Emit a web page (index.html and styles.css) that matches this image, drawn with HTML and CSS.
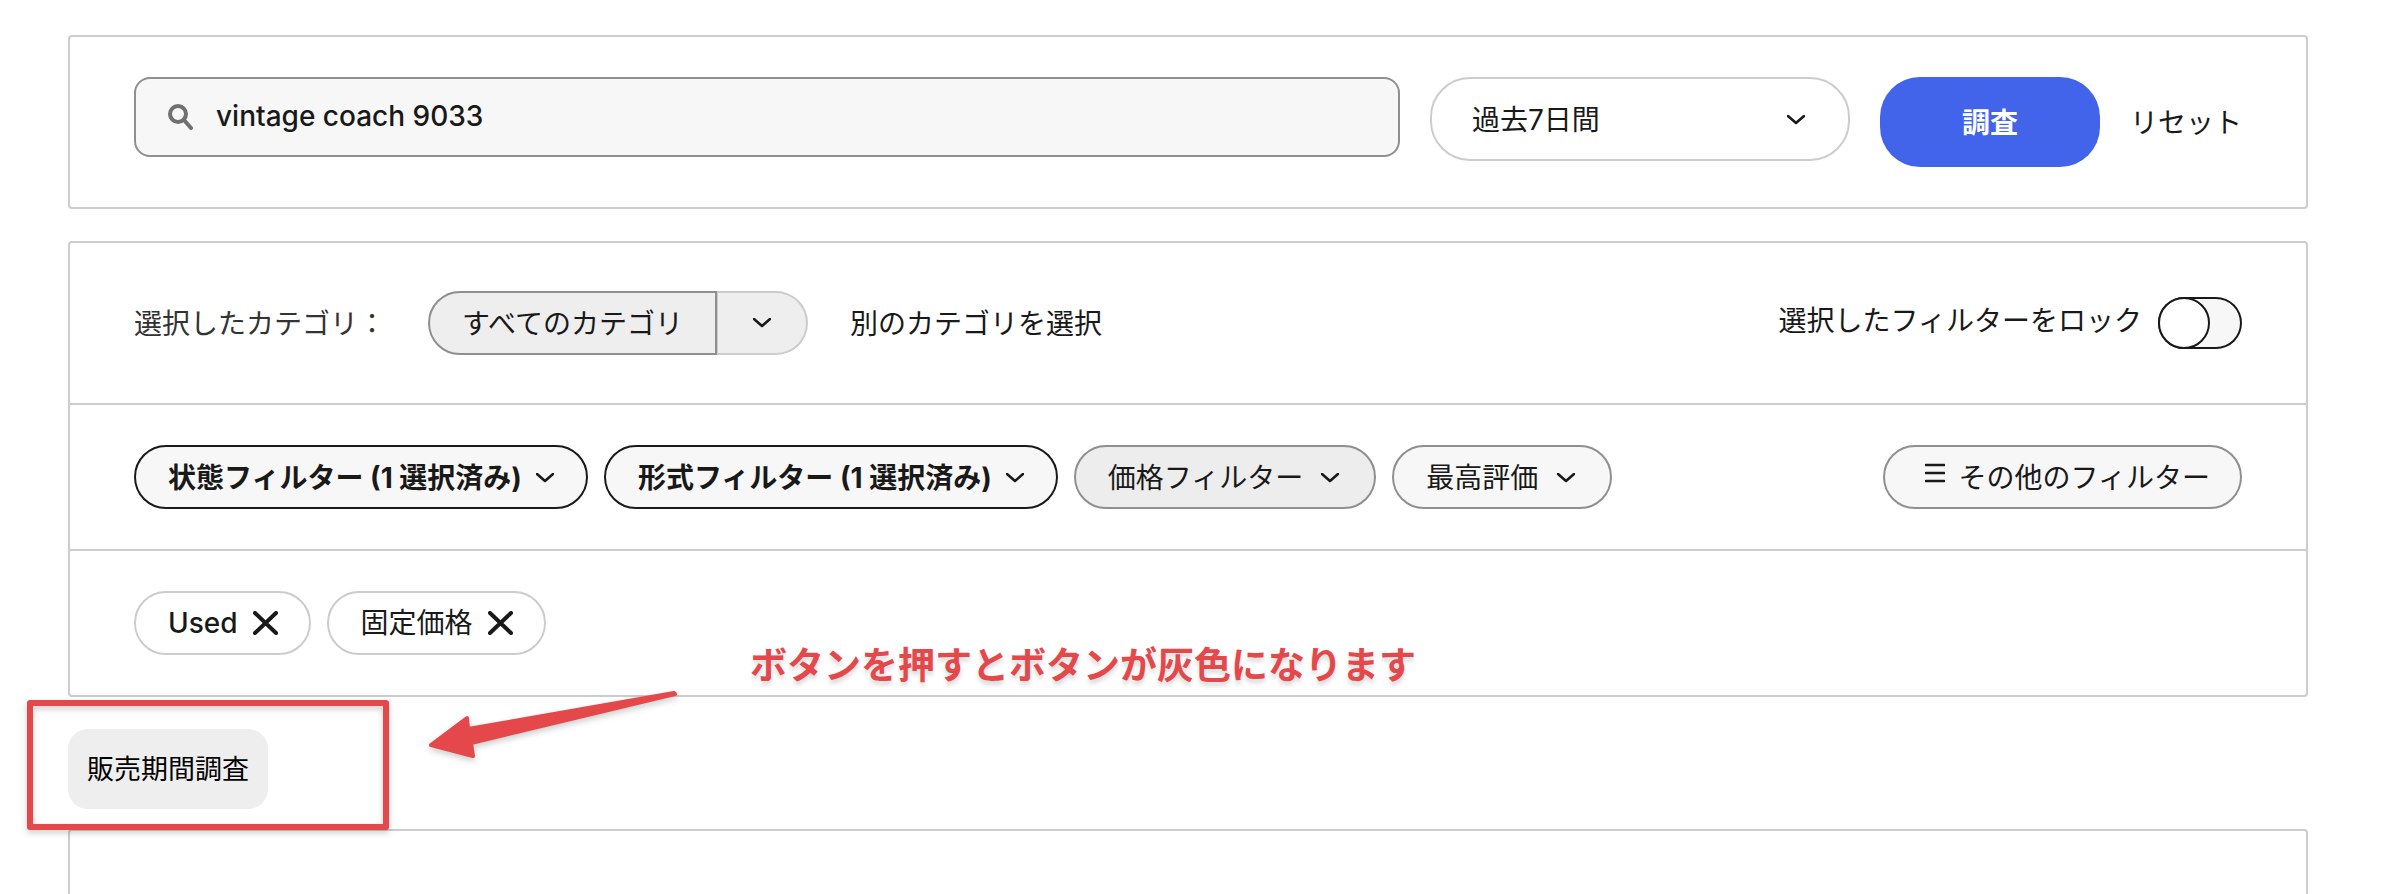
FILE: index.html
```
<!DOCTYPE html>
<html lang="ja">
<head>
<meta charset="UTF-8">
<meta name="viewport" content="width=device-width, initial-scale=1.0">
<title>リサーチ</title>
<link rel="stylesheet" href="styles.css">
</head>
<body>
<main class="page">
    <form class="panel search-panel">
        <label class="search-box">
            <svg class="search-icon" width="26" height="26" viewBox="0 0 26 26" aria-hidden="true">
                <circle cx="10" cy="10" r="8"/>
                <path d="M16 16l7 8"/>
            </svg>
            <input type="text" aria-label="検索キーワード" value="vintage coach 9033">
        </label>
        <div class="period">
            <select aria-label="期間">
                <option>過去7日間</option>
                <option>過去30日間</option>
                <option>過去90日間</option>
            </select>
            <svg class="chevron" width="18" height="10" viewBox="0 0 18 10" aria-hidden="true"><path d="M1 1l8 7 8-7"/></svg>
        </div>
        <button type="submit" class="submit">調査</button>
        <a href="#" class="reset">リセット</a>
    </form>

    <section class="panel">
        <div class="row category-row">
            <span class="category-label">選択したカテゴリ：</span>
            <div class="split">
                <button type="button" class="split-main">すべてのカテゴリ</button>
                <button type="button" class="split-toggle" aria-label="カテゴリを開く">
                    <svg class="chevron" width="18" height="10" viewBox="0 0 18 10" aria-hidden="true"><path d="M1 1l8 7 8-7"/></svg>
                </button>
            </div>
            <a href="#" class="other-category">別のカテゴリを選択</a>
            <div class="lock push">
                <label for="lock">選択したフィルターをロック</label>
                <input type="checkbox" id="lock" class="switch" role="switch">
            </div>
        </div>

        <div class="row">
            <button type="button" class="chip active">状態フィルター (1 選択済み)
                <svg class="chevron" width="18" height="10" viewBox="0 0 18 10" aria-hidden="true"><path d="M1 1l8 7 8-7"/></svg>
            </button>
            <button type="button" class="chip active">形式フィルター (1 選択済み)
                <svg class="chevron" width="18" height="10" viewBox="0 0 18 10" aria-hidden="true"><path d="M1 1l8 7 8-7"/></svg>
            </button>
            <button type="button" class="chip pressed">価格フィルター
                <svg class="chevron" width="18" height="10" viewBox="0 0 18 10" aria-hidden="true"><path d="M1 1l8 7 8-7"/></svg>
            </button>
            <button type="button" class="chip">最高評価
                <svg class="chevron" width="18" height="10" viewBox="0 0 18 10" aria-hidden="true"><path d="M1 1l8 7 8-7"/></svg>
            </button>
            <button type="button" class="chip more push">
                <svg class="menu-icon" width="20" height="26" viewBox="0 0 20 26" aria-hidden="true"><path d="M1 5h18M1 13h18M1 21h18"/></svg>
                その他のフィルター
            </button>
        </div>

        <div class="row">
            <button type="button" class="chip tag"><span class="latin">Used</span>
                <svg class="cross" width="25" height="24" viewBox="0 0 25 24" aria-hidden="true"><path d="M2 2l21 20M23 2L2 22"/></svg>
            </button>
            <button type="button" class="chip tag">固定価格
                <svg class="cross" width="25" height="24" viewBox="0 0 25 24" aria-hidden="true"><path d="M2 2l21 20M23 2L2 22"/></svg>
            </button>
        </div>
    </section>

    <section class="sales">
        <button type="button" class="sales-button">販売期間調査</button>
        <div class="mark-frame"></div>
        <svg class="mark-arrow" width="252" height="72" viewBox="0 0 252 72" aria-hidden="true">
            <path d="M3 56L39 29 40 40 246 4 247 5 43 54 45 67Z"/>
        </svg>
        <p class="mark-text">ボタンを押すとボタンが灰色になります</p>
    </section>

    <section class="panel results"></section>
</main>
</body>
</html>
```

FILE: styles.css
```
*, *::before {
    box-sizing: border-box;
}
body {
    margin: 0;
    background: #fff;
    color: #191919;
    font-family: Inter, "Noto Sans CJK JP", sans-serif;
    font-size: 28px;
    line-height: 40px;
}
button, input, select {
    font: inherit;
    color: inherit;
    margin: 0;
}
button {
    cursor: pointer;
    white-space: nowrap;
}
a {
    color: inherit;
    text-decoration: none;
    white-space: nowrap;
}
svg {
    fill: none;
    stroke: #191919;
    stroke-linecap: round;
    stroke-linejoin: round;
    flex-shrink: 0;
}
.page {
    display: flex;
    flex-direction: column;
    min-height: 100vh;
    padding: 35px 76px 0 68px;
}
.panel {
    border: 2px solid #ccc;
    border-radius: 4px;
}
.chevron {
    stroke-width: 2.6;
}

/* search bar */
.search-panel {
    display: flex;
    align-items: flex-start;
    gap: 30px;
    padding: 40px 64px;
    margin-bottom: 32px;
}
.search-box {
    flex: 1;
    display: flex;
    align-items: center;
    gap: 22px;
    height: 80px;
    padding: 0 32px;
    background: #f7f7f7;
    border: 2px solid #8f8f8f;
    border-radius: 16px;
}
.search-icon {
    stroke: #707070;
    stroke-width: 4;
}
.search-box input {
    flex: 1;
    min-width: 0;
    padding: 0 0 2px;
    border: none;
    outline: none;
    background: transparent;
    font-weight: 500;
}
.period {
    position: relative;
    width: 420px;
}
.period select {
    appearance: none;
    width: 100%;
    height: 84px;
    padding: 2px 80px 0 40px;
    background: #fff;
    border: 2px solid #ccc;
    border-radius: 40px;
}
.period .chevron {
    position: absolute;
    right: 45px;
    top: 38px;
    pointer-events: none;
}
.submit {
    width: 220px;
    height: 90px;
    padding: 2px 0 0;
    background: #4264ea;
    color: #fff;
    font-weight: bold;
    border: none;
    border-radius: 40px;
}
.reset {
    line-height: 92px;
    height: 90px;
}

/* filters */
.row {
    display: flex;
    align-items: center;
    gap: 16px;
    padding: 40px 64px;
}
.row + .row {
    border-top: 2px solid #ccc;
}
.category-row {
    gap: 42px;
    padding: 48px 64px;
}
.push {
    margin-left: auto;
}
.category-label {
    color: #333;
}
.split {
    display: flex;
}
.split button {
    height: 64px;
    background: #eee;
}
.split-main {
    padding: 2px 32px 0;
    border: 2px solid #8f8f8f;
    border-radius: 32px 0 0 32px;
}
.split-toggle {
    display: flex;
    align-items: center;
    padding: 0 35px;
    border: 2px solid #ccc;
    border-left-width: 1px;
    border-radius: 0 32px 32px 0;
}
.category-label, .other-category {
    padding-top: 2px;
}
.lock {
    display: flex;
    align-items: center;
    gap: 16px;
}
.lock label {
    padding-bottom: 4px;
}
.switch {
    appearance: none;
    display: flex;
    width: 84px;
    height: 52px;
    background: #f7f7f7;
    border-radius: 26px;
    box-shadow: inset 0 0 0 2px #191919;
    cursor: pointer;
}
.switch::before {
    content: "";
    width: 52px;
    height: 52px;
    background: #fff;
    border: 2px solid #191919;
    border-radius: 50%;
}
.switch:checked {
    justify-content: flex-end;
}
.chip {
    display: flex;
    align-items: center;
    gap: 19px;
    height: 64px;
    padding: 2px 35px 0 32px;
    background: #f7f7f7;
    border: 2px solid #8f8f8f;
    border-radius: 32px;
}
.chip.active {
    gap: 14px;
    padding-right: 32px;
    border-color: #191919;
    font-weight: bold;
}
.chip.pressed {
    gap: 18px;
    background: #ededed;
}
.chip.more {
    gap: 14px;
    padding: 2px 30px 0 40px;
}
.menu-icon {
    stroke-width: 2.6;
    margin-bottom: 10px;
}
.chip.tag {
    gap: 15px;
    padding: 0 31px 0 32px;
    background: #fff;
    border-color: #ccc;
}
.latin {
    font-weight: 500;
}
.cross {
    stroke-width: 4;
}

/* sales period button and its callout */
.sales {
    position: relative;
    padding: 32px 0 20px;
}
.sales-button {
    display: block;
    height: 80px;
    padding: 2px 19px 0;
    background: #eee;
    color: #000;
    font-size: 27px;
    border: none;
    border-radius: 20px;
}
.mark-frame {
    position: absolute;
    left: -41px;
    top: 3px;
    width: 362px;
    height: 130px;
    border: 6px solid #e5484b;
    border-radius: 3px;
    filter: drop-shadow(0 3px 3px rgba(0,0,0,0.2));
    pointer-events: none;
}
.mark-arrow {
    position: absolute;
    left: 360px;
    top: -8px;
    fill: #e5484b;
    stroke: #e5484b;
    stroke-width: 4;
    filter: drop-shadow(0 3px 3px rgba(0,0,0,0.2));
}
.mark-text {
    position: absolute;
    left: 682px;
    top: -58px;
    margin: 0;
    color: #e5484b;
    font-size: 37px;
    font-weight: bold;
    line-height: 54px;
    white-space: nowrap;
    text-shadow: 0 4px 4px rgba(0,0,0,0.15);
}
.results {
    flex: 1;
    border-bottom: none;
    border-radius: 4px 4px 0 0;
}
```
